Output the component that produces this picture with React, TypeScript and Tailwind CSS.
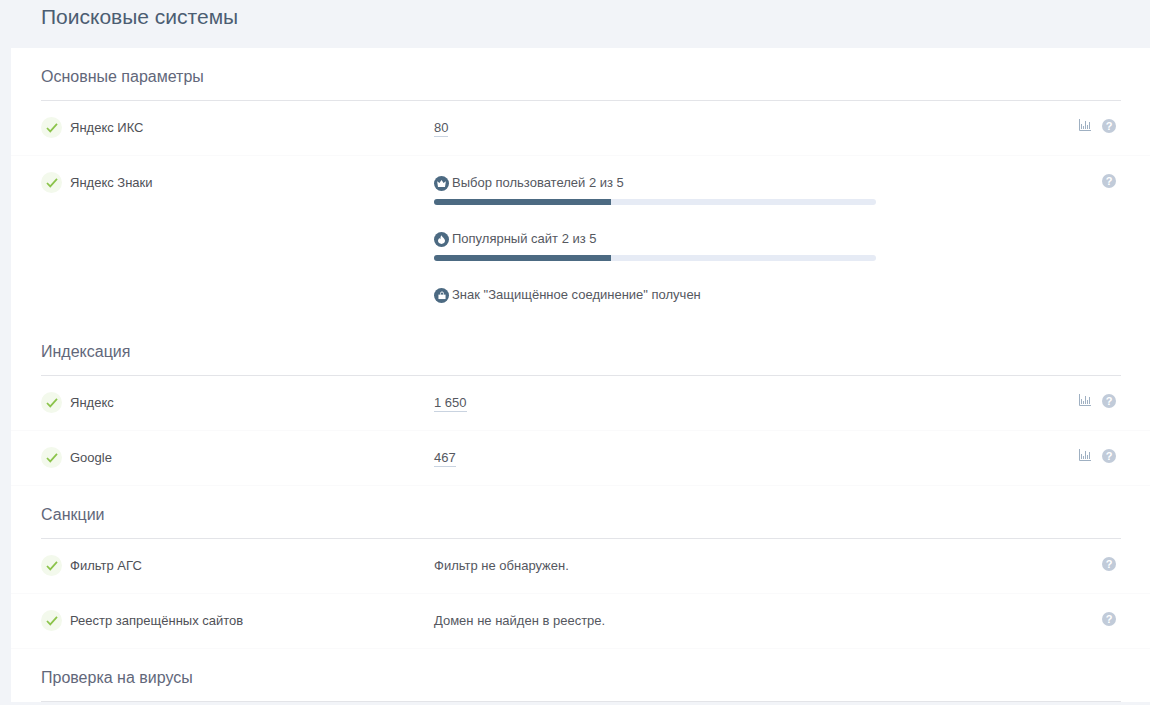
import type { ReactNode } from "react";

function Check() {
  return (
    <span className="flex h-[21px] w-[21px] shrink-0 items-center justify-center rounded-full bg-[#f3f9ec]">
      <svg width="12" height="10" viewBox="0 0 13 11" fill="none" stroke="#8bc34a" strokeWidth="1.9">
        <path d="M1 5.5 L4.6 9.2 L12 1" />
      </svg>
    </span>
  );
}

function Help() {
  return (
    <span className="flex h-[14px] w-[14px] items-center justify-center rounded-full bg-[#c1cbd9] text-[11px] font-bold leading-none text-white">
      ?
    </span>
  );
}

function Chart() {
  return (
    <svg width="12" height="12" viewBox="0 0 12 12" fill="none" stroke="#9fb0c2" strokeWidth="1">
      <path d="M0.5 0 V11.5 H12 M2.5 5 V10 M4.5 7 V10 M6.5 2 V10 M8.5 6 V10 M10.5 3 V10" />
    </svg>
  );
}

function Section({ title }: { title: string }) {
  return (
    <div className="mr-[29px] ml-[30px] flex h-[53px] items-start border-b border-[#e3e4e8] pt-[19px]">
      <h3 className="text-[16px] leading-5 text-[#62677a]">{title}</h3>
    </div>
  );
}

function Row({ label, children, chart, last }: { label: string; children: ReactNode; chart?: boolean; last?: boolean }) {
  return (
    <div className={`flex pr-[34px] pl-[30px] ${last ? "h-[167px]" : "h-[55px] border-b border-[#fafafb]"} pt-[16px]`}>
      <div className="flex w-[393px] shrink-0 items-start gap-2">
        <Check />
        <span className="text-[13px] leading-[22px] text-[#4f5157]">{label}</span>
      </div>
      <div className="flex-1 text-[13px] leading-[22px] text-[#55585f]">{children}</div>
      <div className="flex items-start gap-[11px] pt-[2px]">
        {chart && <Chart />}
        <Help />
      </div>
    </div>
  );
}

function Num({ v }: { v: string }) {
  return <span className="border-b border-[#c9d3e0] pb-px">{v}</span>;
}

function Badge({ icon, text, bar }: { icon: ReactNode; text: string; bar?: boolean }) {
  return (
    <div className="h-[56px]">
      <div className="flex h-[22px] items-center gap-[3px]">
        <span className="flex h-[15px] w-[15px] items-center justify-center rounded-full bg-[#4c6a82]">{icon}</span>
        <span className="text-[13px] text-[#55585f]">{text}</span>
      </div>
      {bar && (
        <div className="mt-[5px] h-[6px] w-[442px] overflow-hidden rounded-full bg-[#e6ebf5]">
          <div className="h-full w-[40%] bg-[#4c6a82]" />
        </div>
      )}
    </div>
  );
}

export default function App() {
  return (
    <div className="h-[705px] overflow-hidden bg-[#f2f4f8] font-['Liberation_Sans',sans-serif]">
      <header className="flex h-12 items-start pt-[5px] pl-[41px]">
        <h1 className="text-[21px] leading-6 text-[#4c5d72]">Поисковые системы</h1>
      </header>
      <div className="ml-[11px] bg-white">
        <Section title="Основные параметры" />
        <Row label="Яндекс ИКС" chart>
          <Num v="80" />
        </Row>
        <Row label="Яндекс Знаки" last>
          <Badge
            text="Выбор пользователей 2 из 5"
            bar
            icon={
              <svg width="9" height="7" viewBox="0 0 10 8" fill="white">
                <path d="M0 1.5 L2.6 3.5 L5 0 L7.4 3.5 L10 1.5 L9 8 H1 Z" />
              </svg>
            }
          />
          <Badge
            text="Популярный сайт 2 из 5"
            bar
            icon={
              <svg width="7" height="9" viewBox="0 0 8 10" fill="white">
                <path d="M4 0 C4.5 2 8 3.5 8 6.5 C8 8.7 6.2 10 4 10 C1.8 10 0 8.7 0 6.5 C0 5 1 3.8 1.7 3.2 C1.9 4 2.3 4.5 2.8 4.6 C2.6 3 3 1.2 4 0 Z" />
              </svg>
            }
          />
          <Badge
            text={'Знак "Защищённое соединение" получен'}
            icon={
              <svg width="8" height="9" viewBox="0 0 9 9" fill="white">
                <path d="M0.5 3.5 H8.5 V8.5 H0.5 Z" />
                <path d="M2.8 3.5 V2.2 A1.7 1.7 0 0 1 6.2 2.2 V3.5" fill="none" stroke="white" strokeWidth="1" />
              </svg>
            }
          />
        </Row>
        <Section title="Индексация" />
        <Row label="Яндекс" chart>
          <Num v="1 650" />
        </Row>
        <Row label="Google" chart>
          <Num v="467" />
        </Row>
        <Section title="Санкции" />
        <Row label="Фильтр АГС">Фильтр не обнаружен.</Row>
        <Row label="Реестр запрещённых сайтов">Домен не найден в реестре.</Row>
        <Section title="Проверка на вирусы" />
      </div>
    </div>
  );
}
